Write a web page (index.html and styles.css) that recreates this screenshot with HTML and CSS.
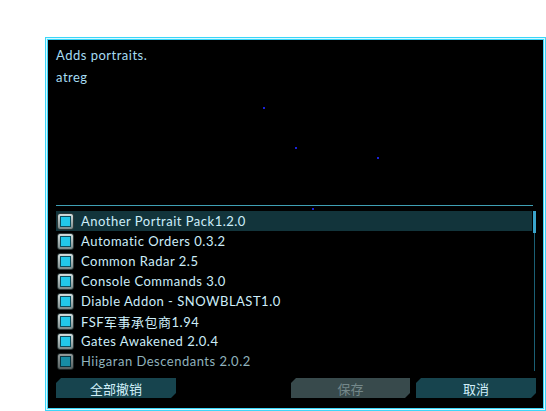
FILE: index.html
```html
<!DOCTYPE html>
<html lang="zh">
<head>
    <meta charset="UTF-8">
    <title>Mods</title>
    <link rel="stylesheet" href="styles.css">
</head>
<body>
    <div class="frame">
        <div class="preview">
            <p class="desc">Adds portraits.</p>
            <p class="desc">atreg</p>
            <span class="star" style="left:215px; top:67px"></span>
            <span class="star" style="left:247px; top:107px"></span>
            <span class="star" style="left:329px; top:117px"></span>
            <span class="star" style="left:264px; top:168px"></span>
        </div>
        <div class="sep"></div>

        <div class="list-wrap">
            <ul class="mods">
                <li class="mod selected"><span class="check"><span></span></span>Another Portrait Pack1.2.0</li>
                <li class="mod"><span class="check"><span></span></span>Automatic Orders 0.3.2</li>
                <li class="mod"><span class="check"><span></span></span>Common Radar 2.5</li>
                <li class="mod"><span class="check"><span></span></span>Console Commands 3.0</li>
                <li class="mod"><span class="check"><span></span></span>Diable Addon - SNOWBLAST1.0</li>
                <li class="mod"><span class="check"><span></span></span>FSF军事承包商1.94</li>
                <li class="mod"><span class="check"><span></span></span>Gates Awakened 2.0.4</li>
                <li class="mod faded"><span class="check"><span></span></span>Hiigaran Descendants 2.0.2</li>
            </ul>
            <div class="scroll"><div class="thumb"></div></div>
        </div>

        <div class="buttons">
            <button class="btn">全部撤销</button>
            <span class="spacer"></span>
            <button class="btn disabled">保存</button>
            <button class="btn">取消</button>
        </div>
    </div>
</body>
</html>
```

FILE: styles.css
```css
body {
    margin: 0;
    background: #ffffff;
    font-family: Lato, "Noto Sans CJK SC", sans-serif;
}
.frame {
    box-sizing: border-box;
    margin: 37px 0 0 45px;
    width: 501px;
    height: 374px;
    background: #000000;
    border: 1px solid #3cd6f8;
    box-shadow: inset 0 0 0 1px #d8f8ff, inset 0 0 0 2px #3cd6f8;
    padding: 2px;
    display: flex;
    flex-direction: column;
}
.preview {
    position: relative;
    height: 165px;
    padding: 4px 8px 0;
    box-sizing: border-box;
}
.desc {
    margin: 0;
    font-size: 13px;
    line-height: 22px;
    letter-spacing: 0.5px;
    color: #a6dcf2;
}
.star {
    position: absolute;
    width: 2px;
    height: 2px;
    background: #1a22d8;
}
.sep {
    height: 1px;
    margin: 0 10px 0 8px;
    background: #3f9fb4;
}
.list-wrap {
    display: flex;
    margin: 5px 0 0 8px;
}
.mods {
    list-style: none;
    margin: 0;
    padding: 0;
    width: 476px;
}
.mod {
    height: 20px;
    display: flex;
    align-items: center;
    padding-left: 1px;
    font-size: 13px;
    letter-spacing: 0.5px;
    color: #cdeefa;
    white-space: nowrap;
}
.mod.selected {
    background: #12343b;
}
.mod.faded {
    color: #8fb2bd;
}
.mod.faded .check {
    opacity: 0.7;
}
.check {
    box-sizing: border-box;
    width: 17px;
    height: 17px;
    margin-right: 7px;
    padding: 2px;
    border-radius: 3px;
    background: linear-gradient(#d2dcdc, #7c8a8a);
    border: 1px solid #2c3a3a;
}
.check span {
    display: block;
    box-sizing: border-box;
    width: 11px;
    height: 11px;
    border: 1px solid #0a4e5e;
    background-color: #22c8ea;
    background-image: radial-gradient(#5ee4ff 35%, transparent 40%);
    background-size: 2px 2px;
}
.scroll {
    position: relative;
    width: 3px;
    height: 160px;
    margin-left: 1px;
}
.scroll::before {
    content: "";
    position: absolute;
    left: 1px;
    top: 0;
    bottom: 0;
    width: 1px;
    background: #1b5f74;
}
.thumb {
    position: relative;
    width: 3px;
    height: 22px;
    background: #3aa4cc;
}
.buttons {
    display: flex;
    gap: 6px;
    margin: 7px 0 0 8px;
}
.spacer {
    width: 103px;
}
.btn {
    width: 120px;
    height: 20px;
    border: none;
    padding: 0;
    font-family: "Noto Sans CJK SC", sans-serif;
    font-size: 13px;
    color: #d2f0fa;
    background: #17444e;
    clip-path: polygon(5px 0, 100% 0, 100% calc(100% - 5px), calc(100% - 5px) 100%, 0 100%, 0 5px);
}
.btn.disabled {
    width: 119px;
    color: #74888a;
    background: #384a4c;
}
```
